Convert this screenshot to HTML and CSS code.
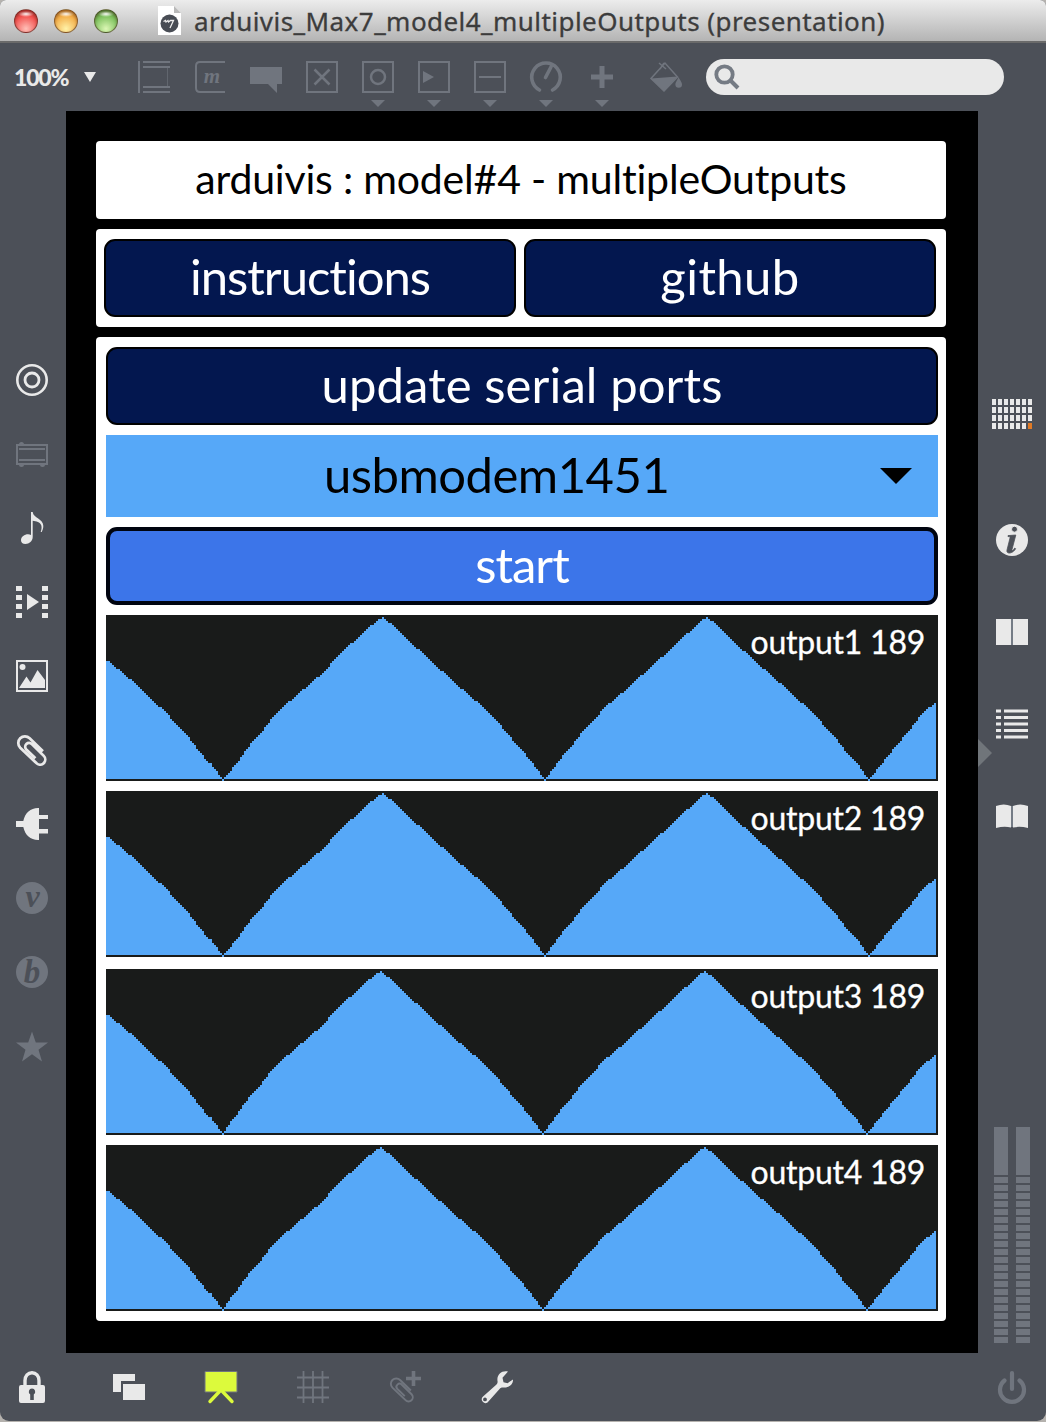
FILE: index.html
```html
<!DOCTYPE html>
<html lang="en">
<head>
<meta charset="utf-8">
<title>arduivis_Max7_model4_multipleOutputs (presentation)</title>
<link rel="stylesheet" href="styles.css">
</head>
<body>
<svg class="defs" aria-hidden="true">
  <symbol id="clip" viewBox="0 0 32 32">
    <path d="M27.5 17.5 13.5 3.900A7 7 0 0 0 3.600 13.800L20.600 30A5.200 5.200 0 0 0 28.400 22.400L15.800 10A3.900 3.900 0 0 0 10 15.600L19.600 24.800" transform="translate(.8 .6) scale(.95)"/>
  </symbol>
</svg>
<div class="window">
  <header class="titlebar">
    <span class="light red"></span><span class="light amber"></span><span class="light green"></span>
    <svg class="doc" width="23" height="29" viewBox="0 0 23 29"><path d="M0 0h16l7 7v22H0z" fill="#fff"/><path d="M16 0v7h7z" fill="#b9b9b9"/><circle cx="11.500" cy="17.500" r="9" fill="#484c54"/><path d="M5.500 15.500l2-1 .5 1.500 2-1.500.5 1.500 2-1.500h3l-3.500 7.500" fill="none" stroke="#eee" stroke-width="1.300"/></svg>
    <h1 class="title">arduivis_Max7_model4_multipleOutputs (presentation)</h1>
  </header>

  <nav class="toolbar">
    <span class="zoom">100%</span>
    <svg class="zoom-caret" width="12" height="10"><path d="M0 0h12L6 10z" fill="#e9e9e9"/></svg>
    <div class="tools">
      <div class="tool"><svg class="ico" viewBox="0 0 32 32"><path d="M1 0v32M5 1h27M5 6h27M5 26h27M5 31h27" class="l2"/><path d="M29.500 7v18" stroke-width=".6"/></svg></div>
      <div class="tool"><svg class="ico" viewBox="0 0 32 32"><path d="M31 1H6Q2 1 2 5v22q0 4 4 4h25" class="l2"/><text x="18" y="21.500" class="glyph" font-size="21">m</text></svg></div>
      <div class="tool"><svg class="ico" viewBox="0 0 32 32"><path d="M0 6h32v17h-5v9l-9-9H0z" class="f"/></svg></div>
      <div class="tool"><svg class="ico" viewBox="0 0 32 32"><path d="M1 1h30v30H1z" class="l2"/><path d="M8.500 8.500l15 15M23.500 8.500l-15 15" class="l3"/></svg></div>
      <div class="tool drop"><svg class="ico" viewBox="0 0 32 32"><path d="M1 1h30v30H1z" class="l2"/><circle cx="16" cy="16" r="7" class="l3"/></svg></div>
      <div class="tool drop"><svg class="ico" viewBox="0 0 32 32"><path d="M1 1h30v30H1z" class="l2"/><path d="M5 10l11 6-11 6z" class="f"/></svg></div>
      <div class="tool drop"><svg class="ico" viewBox="0 0 32 32"><path d="M1 1h30v30H1zM5 16h22" class="l2"/></svg></div>
      <div class="tool drop"><svg class="ico" viewBox="0 0 32 32"><path d="M9.500 29A14.300 14.300 0 1 1 22.500 29M15.500 16.500 21 6" stroke-width="3.600" stroke-linecap="round"/></svg></div>
      <div class="tool drop"><svg class="ico" viewBox="0 0 32 32"><path d="M5 16h22M16 5v22" stroke-width="5"/></svg></div>
      <div class="tool bucket"><svg class="ico" viewBox="0 0 32 32"><path d="M15 2 1 17.500l13 12.500 13.500-14zM9 2l7 6M14 2l-4 6" stroke-width="1.500"/><path d="M1 17.500l26.500-2L14 30.500z" class="f"/><path d="M28.500 16c2 4 3.500 5.500 3.500 7.500a3.300 3.300 0 0 1-6.600 0c0-2 1.600-3.500 3.100-7.500z" class="f"/></svg></div>
    </div>
    <div class="search"><svg width="26" height="26" viewBox="0 0 26 26"><path d="M17 17l7 7" stroke="#757b84" stroke-width="4"/><circle cx="10.500" cy="10.500" r="8.200" fill="none" stroke="#757b84" stroke-width="3.800"/></svg></div>
  </nav>

  <div class="body">
    <aside class="left">
      <svg class="ico on" viewBox="0 0 32 32"><circle cx="16" cy="16" r="14.700" stroke-width="2.600"/><circle cx="16" cy="16" r="7" stroke-width="2.800"/></svg>
      <svg class="ico" viewBox="0 0 32 32"><path d="M1 7h30v19H1zM3 11h26M3 22h26" class="l2"/><path d="M3 6.500a2.500 2.500 0 0 1 5 0zM3 26.500a2.500 2.500 0 0 0 5 0zM24 26.500a2.500 2.500 0 0 0 5 0z" class="f"/></svg>
      <svg class="ico on" viewBox="0 0 32 32"><path d="M15 0h1.700c.7 6.500 10.600 6.500 10.600 13.800 0 2.400-.6 4.200-1.600 6.200h-1c.8-2.500 1.200-4.500.6-6.500-1.200-3.400-5-4.400-8.600-4.700V25c0 4-3.500 7-7.200 7C6.500 32 5 30.500 5 28.300c0-3.500 3.600-6 7-6 1.200 0 2.200.2 3 .8z" class="f"/></svg>
      <svg class="ico on" viewBox="0 0 32 32"><path d="M0 0h6v5H0zM0 9h6v5H0zM0 18h6v5H0zM0 27h6v5H0zM26 0h6v5h-6zM26 9h6v5h-6zM26 18h6v5h-6zM26 27h6v5h-6zM11 8l12 8-12 8z" class="f"/></svg>
      <svg class="ico on" viewBox="0 0 32 32"><path d="M1 1h30v30H1z" class="l2"/><circle cx="6.500" cy="7" r="3" class="f"/><path d="M3 28l7.500-11.500 4 6L21.500 10 29 20v8z" class="f"/></svg>
      <svg class="ico on"><use href="#clip" stroke-width="2.900"/></svg>
      <svg class="ico on" viewBox="0 0 32 32"><path d="M0 13h7.300C9 5 14.500 0 22 0h1v7h9v4h-9v10h9v4.500h-9V32h-1C14.500 32 9 27 7.300 19H0z" class="f"/></svg>
      <svg class="ico" viewBox="0 0 32 32"><circle cx="16" cy="16" r="16" class="f"/><text x="16.500" y="25" class="glyph dark" font-size="32">v</text></svg>
      <svg class="ico" viewBox="0 0 32 32"><circle cx="16" cy="16" r="16" class="f"/><text x="16" y="26.500" class="glyph dark" font-size="33">b</text></svg>
      <svg class="ico" viewBox="0 0 32 32"><path d="M16 1.500l3.800 10.900 12.200 0-9.500 7.300 3.500 11.800-10-7.200-10 7.200 3.500-11.800L0 12.400l12.200 0z" class="f"/></svg>
    </aside>

    <main class="canvas">
      <section class="panel heading">arduivis : model#4 - multipleOutputs</section>
      <section class="panel links">
        <button class="btn"><span class="t-ins">instructions</span></button>
        <button class="btn"><span class="t-git">github</span></button>
      </section>
      <section class="panel serial">
        <button class="btn"><span class="t-upd">update serial ports</span></button>
        <div class="combo"><span class="t-usb">usbmodem1451</span><svg width="32" height="16"><path d="M0 0h32L16 16z"/></svg></div>
        <button class="btn start"><span class="t-start">start</span></button>
        <div class="plots">
          <div class="plot"><svg width="832" height="166"><path data-shift="0"/></svg><span class="reading">output1 189</span></div>
          <div class="plot"><svg width="832" height="166"><path data-shift="0"/></svg><span class="reading">output2 189</span></div>
          <div class="plot third"><svg width="832" height="166"><path data-shift="2"/></svg><span class="reading">output3 189</span></div>
          <div class="plot"><svg width="832" height="166"><path data-shift="2"/></svg><span class="reading">output4 189</span></div>
        </div>
      </section>
    </main>

    <aside class="right">
      <svg class="r-grid" width="40" height="30"><defs><pattern id="cell" width="6" height="8" patternUnits="userSpaceOnUse"><path d="M0 0h4v6H0z" fill="#e9e9e9"/></pattern></defs><path d="M0 0h40v30H0z" fill="url(#cell)"/><path d="M36 24h4v6h-4z" fill="#e07a25"/></svg>
      <svg class="ico on r-info" viewBox="0 0 32 32"><circle cx="16" cy="16" r="16" class="f"/><circle cx="18.500" cy="5.200" r="3" fill="#4c5058"/><path d="M19.800 11l-3.800 14.500c-.4 1.600.6 1.700 2.800-1.500l.8.700c-2.600 5-9.700 6-8.600 1.300L14 14c.3-1.400-.4-1.500-2-1.400v-1z" fill="#4c5058" stroke="#4c5058" stroke-width=".8"/></svg>
      <svg class="r-cols" width="32" height="26"><path d="M0 0h15v26H0zM17 0h15v26H17z" fill="#e9e9e9"/><path d="M15 0h2v26h-2z" fill="#757c86"/></svg>
      <svg class="r-list" width="32" height="30"><path d="M0 2h5M8 2h24M0 8.500h5M8 8.500h24M0 15h5M8 15h24M0 21.500h5M8 21.500h24M0 28h5M8 28h24" stroke="#e9e9e9" stroke-width="3"/></svg>
      <svg class="r-book" width="32" height="25"><path d="M0 2Q8-1 15 2v21.500Q8 22 0 24zM17 2Q24-1 32 2v22Q24 22 17 23.500z" fill="#e9e9e9"/><path d="M15 2h2v21h-2z" fill="#757c86"/></svg>
      <span class="handle"></span>
      <div class="meters"><span class="meter"></span><span class="meter"></span></div>
    </aside>
  </div>

  <footer class="footer">
    <svg class="ico on lock" viewBox="0 0 32 32"><path d="M9 15V9.500C9 5 12 1.700 16 1.700S23 5 23 9.500V15" stroke-width="3.400"/><path fill-rule="evenodd" d="M5 14h22q2 0 2 2v14q0 2-2 2H5q-2 0-2-2V16q0-2 2-2zM16 17.500a3.300 3.300 0 0 0-1.800 6V29h3.600v-5.500a3.300 3.300 0 0 0-1.800-6z" class="f"/></svg>
    <svg class="ico on" viewBox="0 0 32 32"><path d="M0 3h22v7H8v11H0zM10 13h22v16H10z" class="f"/></svg>
    <svg class="ico" viewBox="0 0 32 32"><path d="M0 .5h32v20.500H0z" fill="#dcfa3c"/><path d="M14.500 20.500 5 30.500M17.500 20.500l9.500 10" stroke="#dcfa3c" stroke-width="3.400" stroke-linecap="round"/></svg>
    <svg class="ico" viewBox="0 0 32 32"><path d="M6.500 0v32M16 0v32M25.500 0v32M0 6.500h32M0 16.500h32M0 26.500h32" stroke-width="1.800"/></svg>
    <svg class="ico" viewBox="0 0 32 32"><use href="#clip" x="0" y="5" width="26" height="27" stroke-width="2.500"/><path d="M17 7.500h15M24.500 0v15" stroke-width="3.600"/></svg>
    <svg class="ico on" viewBox="0 0 32 32"><path fill-rule="evenodd" d="M27 .5c-6-1.500-11.500 3-10.500 9.500.3 1.500 0 2.500-1 3.500L1.500 26a3.800 3.800 0 0 0 5 5.500L19 17.500c1-1 2-1.200 3.500-1C28 17 32.500 13 32 8.500l-5.500 3.700-4-1-1-4.500zM4 26.500a1.900 1.900 0 1 1 0 3.800 1.900 1.900 0 0 1 0-3.800z" class="f"/></svg>
    <svg class="ico power" viewBox="0 0 32 32"><path d="M8.500 9.500a12 12 0 1 0 15 0M16 2v16" stroke-width="4.200" stroke-linecap="round"/></svg>
  </footer>
</div>
<script src="plots.js"></script>
</body>
</html>
```
FILE: styles.css
```css
* { box-sizing: border-box; }
body { margin: 0; background: #b5b2ae; font-family: Lato, "Liberation Sans", sans-serif; font-variant-ligatures: none; }
svg { display: block; flex: none; }
.defs { position: absolute; width: 0; height: 0; }
.window { width: 1046px; height: 1421px; display: flex; flex-direction: column; background: #4c5058; border-radius: 6px 6px 9px 9px; overflow: hidden; }

.titlebar { height: 43px; display: flex; align-items: center; padding-left: 14px; background: linear-gradient(#ececec, #b4b4b4); border-bottom: 2px solid #6a6a6a; }
.light { width: 24px; height: 24px; margin-right: 16px; border-radius: 50%; border: 1px solid rgba(60, 30, 20, .55); flex: none; box-shadow: inset 0 2px 3px rgba(60, 20, 10, .35); }
.red { background: radial-gradient(ellipse 8px 3px at 50% 18%, #fff, transparent), radial-gradient(circle at 50% 85%, #ffc0b8, #f2524f 60%, #c22c2c); }
.amber { background: radial-gradient(ellipse 8px 3px at 50% 18%, #fff, transparent), radial-gradient(circle at 50% 85%, #fff2a8, #f3ae49 60%, #c47a20); }
.green { background: radial-gradient(ellipse 8px 3px at 50% 18%, #fff, transparent), radial-gradient(circle at 50% 85%, #dcf7b5, #7cc05c 60%, #47852f); }
.doc { margin-left: 24px; }
.title { margin: 0 0 0 13px; padding-top: 1px; font: 400 26px/41px "Noto Sans", sans-serif; letter-spacing: .45px; -webkit-text-stroke: .3px #3c3c3c; color: #3c3c3c; white-space: nowrap; }

.toolbar { height: 68px; display: flex; align-items: center; padding-left: 14px; }
.zoom { width: 70px; font-size: 23px; font-weight: 900; letter-spacing: -1.2px; line-height: 32px; color: #e9e9e9; }
.tools { display: flex; gap: 24px; margin-left: 42px; }
.tool { position: relative; width: 32px; height: 32px; }
.tool.drop::after { content: ""; position: absolute; left: 9px; top: 39px; border: 7px solid transparent; border-top-color: #70757e; border-bottom: 0; }
.bucket { margin-left: 8px; }
.ico { width: 32px; height: 32px; fill: none; stroke: #70757e; overflow: visible; color: #70757e; }
.ico.on { stroke: #e9e9e9; color: #e9e9e9; }
.l2 { stroke-width: 2; }
.l3 { stroke-width: 2.5; }
.f { fill: currentColor; stroke: none; }
.glyph { font-family: "Liberation Serif", serif; font-style: italic; font-weight: 700; text-anchor: middle; fill: #70757e; stroke: none; }
.glyph.dark { fill: #4c5058; }
.search { width: 298px; height: 36px; margin-left: 24px; padding: 5px 8px; border-radius: 18px; background: #e9e9e9; }

.body { height: 1242px; display: flex; }
.left { width: 66px; display: flex; flex-direction: column; align-items: center; gap: 42px; padding: 253px 2px 0 0; }
.canvas { width: 912px; padding: 30px 32px 32px 30px; background: #000; display: flex; flex-direction: column; gap: 10px; }
.panel { background: #fff; border-radius: 4px; }
.heading { height: 78px; text-align: center; font-size: 41px; line-height: 75px; letter-spacing: -.2px; white-space: nowrap; color: #000; }
.links { height: 98px; display: flex; gap: 8px; padding: 10px 10px 10px 8px; }
.btn { display: flex; align-items: center; justify-content: center; width: 100%; height: 78px; padding: 0 0 5px; border: 2px solid #000; border-radius: 11px; background: #03174f; color: #fff; font: 400 49px/60px Lato, sans-serif; font-variant-ligatures: none; }
.t-ins { letter-spacing: -1px; }
.t-git { letter-spacing: .4px; }
.t-upd { letter-spacing: .1px; }
.t-usb { letter-spacing: -.5px; }
.t-start { letter-spacing: -1px; }
.serial { height: 984px; padding: 10px 8px 10px 10px; display: flex; flex-direction: column; gap: 10px; }
.combo { height: 82px; display: flex; align-items: center; justify-content: space-between; padding: 0 26px 0 218px; background: #56a8f8; font-size: 49px; line-height: 60px; color: #000; }
.combo span { padding-bottom: 5px; }
.start { border: 4px solid #00040f; background: #3c75e9; }
.plots { display: flex; flex-direction: column; gap: 10px; }
.plot { position: relative; height: 166px; background: #191b1a; }
.third { margin-top: 2px; }
.plot path { fill: #56a8f8; shape-rendering: crispEdges; }
.reading { position: absolute; right: 13px; top: 7px; font-size: 32px; line-height: 40px; letter-spacing: -.25px; -webkit-text-stroke: .3px #fff; color: #fff; white-space: nowrap; }

.right { position: relative; width: 68px; display: flex; flex-direction: column; align-items: center; padding-top: 288px; }
.r-info { margin-top: 95px; }
.r-cols { margin-top: 63px; }
.r-list { margin-top: 64px; }
.r-book { margin-top: 65px; }
.handle { position: absolute; left: 0; top: 628px; border: 14px solid transparent; border-left-color: #70757a; border-right: 0; }
.meters { display: flex; gap: 8px; margin-top: 298px; }
.meter { width: 14px; height: 216px; background: linear-gradient(#70757e, #70757e) 0 0 / 14px 48px no-repeat, repeating-linear-gradient(transparent 0 2px, #70757e 2px 8px); }

.footer { height: 68px; display: flex; align-items: center; gap: 60px; padding: 0 18px 0 16px; }
.lock { margin-right: 5px; }
.power { margin-left: auto; }
```
FILE: plots.js
```js
// Sampled waveform, as [x, y] vertices in plot pixels.
const wave = [[0,44.3],[13.3,55],[35.7,74],[54,92],[62,99],[67.3,106.7],[80.7,119.3],[92.3,135],[100.7,145.7],[104.7,148.3],[117,165],
[130.7,148.3],[144,130],[155.7,116.7],[167.3,101.7],[177.3,91.7],[199,73.3],[220,55],[225.3,48.3],[235.7,37.7],[260.7,14.3],[276,2.3],
[285.7,9],[305.7,28.3],[332.3,52.7],[354,72.3],[377.3,92.3],[390.7,105.7],[404,121.7],[414,132.7],[425.7,146.7],[439,165],
[455.7,142.3],[469,126.7],[479,113.3],[490.7,101.7],[499,92.3],[520.7,74],[540.7,55.7],[560.7,37.7],[582.3,17.7],[600,2.3],
[609,8.3],[629,27.7],[651.3,48.3],[679,72.3],[700.7,92.3],[715.7,107.7],[727.3,120],[740,136.7],[752.3,150],[763,165],
[777.3,146.7],[790.7,130],[802.3,116.7],[814,101.7],[822.3,93.3],[834,84]];

function level(x, shift) {
  const px = x > 120 ? x + shift : x;
  const i = Math.max(1, wave.findIndex(p => p[0] >= px));
  const [x0, y0] = wave[i - 1], [x1, y1] = wave[i];
  return y0 + (y1 - y0) * (px - x0) / (x1 - x0);
}

// Each sample is drawn as a column two pixels wide.
document.querySelectorAll('path[data-shift]').forEach(path => {
  const shift = Number(path.dataset.shift);
  let d = 'M0 164';
  for (let x = 0; x < 830; x += 2) {
    d += `V${Math.round(level(x + 1, shift) / 2) * 2}H${x + 2}`;
  }
  path.setAttribute('d', d + 'V164z');
});
```
